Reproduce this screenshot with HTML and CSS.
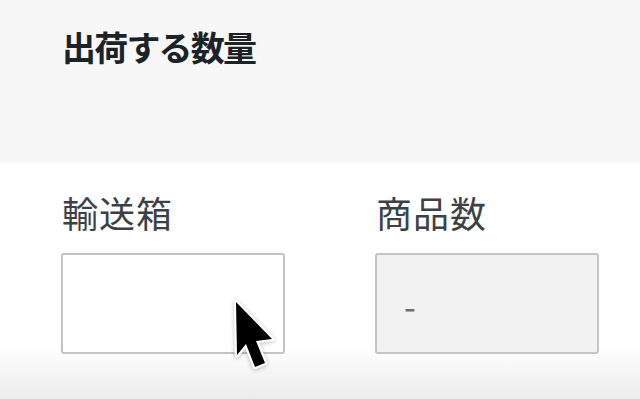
FILE: index.html
```html
<!DOCTYPE html>
<html lang="ja">
<head>
<meta charset="utf-8">
<link rel="stylesheet" href="styles.css">
</head>
<body>
<div class="page">
  <header class="header">
    <h1 class="title">出荷する数量</h1>
  </header>
  <section class="fields">
    <div class="field">
      <label class="label">輸送箱</label>
      <div class="input"></div>
    </div>
    <div class="field">
      <label class="label">商品数</label>
      <div class="input input-disabled"><span class="dash">-</span></div>
    </div>
  </section>
  <svg class="cursor" width="46" height="76" viewBox="0 0 46 76">
    <path d="M4 4 L5 57 L14 46 L23 69 L33 65 L24 43 L40 41 Z" fill="#000" stroke="#fff" stroke-width="4.5" stroke-linejoin="round" paint-order="stroke"/>
  </svg>
</div>
</body>
</html>
```
FILE: styles.css
```css
html, body {
  margin: 0;
  padding: 0;
}
body {
  width: 640px;
  height: 399px;
  overflow: hidden;
  font-family: "Noto Sans CJK JP", "Noto Sans", sans-serif;
  background: linear-gradient(to bottom, #ffffff 0, #ffffff 345px, #ececec 399px);
}
.page {
  position: relative;
  height: 399px;
}
.header {
  height: 163px;
  background: #f7f7f7;
  padding: 0 0 0 62px;
  box-sizing: border-box;
}
.title {
  margin: 0;
  padding-top: 23px;
  font-size: 34px;
  line-height: 48px;
  font-weight: 700;
  color: #1b2327;
  letter-spacing: -1.8px;
}
.fields {
  display: flex;
  gap: 90px;
  padding: 24px 0 0 61px;
}
.field {
  display: flex;
  flex-direction: column;
  width: 224px;
}
.label {
  font-size: 36px;
  line-height: 50px;
  color: #3b4246;
  font-weight: 400;
  padding-left: 1px;
  letter-spacing: 1px;
}
.input {
  margin-top: 16px;
  height: 101px;
  box-sizing: border-box;
  border: 2px solid #c4c4c4;
  border-radius: 3px;
  background: #ffffff;
  display: flex;
  align-items: center;
  padding-left: 27px;
}
.input-disabled {
  background: #f2f2f2;
}
.dash {
  font-size: 34px;
  line-height: 1;
  color: #707070;
  margin-top: 4px;
}
.cursor {
  position: absolute;
  left: 232px;
  top: 298px;
  filter: drop-shadow(0 1px 2px rgba(0,0,0,0.25));
}
```
